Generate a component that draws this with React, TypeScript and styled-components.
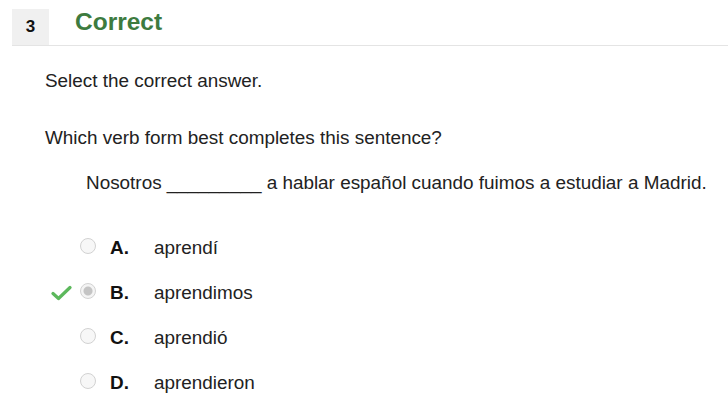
import React from "react";
import styled, { createGlobalStyle } from "styled-components";

const Global = createGlobalStyle`
  html, body { margin: 0; padding: 0; background: #fff; }
  body { font-family: "Liberation Sans", Arial, sans-serif; color: #222; }
`;

const Page = styled.div`
  width: 728px;
  height: 410px;
  overflow: hidden;
`;

const Header = styled.div`
  display: flex;
  align-items: stretch;
  margin: 9px 0 0 12px;
  height: 36px;
  border-bottom: 1px solid #e4e4e4;
`;

const Number = styled.div`
  width: 37px;
  background: #f0f0f0;
  display: flex;
  align-items: center;
  justify-content: center;
  font-weight: bold;
  font-size: 17px;
  color: #111;
`;

const Status = styled.div`
  margin-left: 26px;
  color: #3d7b3f;
  font-weight: bold;
  font-size: 24.5px;
  line-height: 28px;
  margin-top: -1px;
`;

const Body = styled.div`
  padding: 0 0 0 45px;
  font-size: 18.9px;
`;

const Instruction = styled.p`
  margin: 24px 0 0;
  line-height: 22px;
`;

const Question = styled.p`
  margin: 35px 0 0;
  line-height: 22px;
`;

const Sentence = styled.p`
  margin: 23px 0 0 41px;
  line-height: 22px;
`;

const Options = styled.div`
  margin-top: 42.5px;
  display: flex;
  flex-direction: column;
  gap: 23.3px;
`;

const Option = styled.div`
  display: flex;
  align-items: center;
  height: 22px;
`;

const Mark = styled.div`
  width: 30px;
  margin-left: 5px;
  display: flex;
  align-items: center;
`;

const Radio = styled.span<{ $checked?: boolean }>`
  width: 16px;
  height: 16px;
  border-radius: 50%;
  box-sizing: border-box;
  border: 1px solid #d2d2d2;
  background: ${(p) => (p.$checked ? "radial-gradient(circle, #c4c4c4 0 4px, #f4f4f4 5px)" : "#f7f7f7")};
  margin-top: -4px;
`;

const Letter = styled.span`
  font-weight: bold;
  width: 44px;
  margin-left: 14px;
  color: #111;
`;

const Text = styled.span`
  color: #222;
`;

const Check = () => (
  <svg width="22" height="18" viewBox="0 0 22 18">
    <path d="M3 9.5 L8.5 14.5 L20 3.5" fill="none" stroke="#5cb85c" strokeWidth="3.2" strokeLinecap="round" strokeLinejoin="round" />
  </svg>
);

const answers = [
  { letter: "A.", text: "aprendí" },
  { letter: "B.", text: "aprendimos", correct: true },
  { letter: "C.", text: "aprendió" },
  { letter: "D.", text: "aprendieron" },
];

export default function App() {
  return (
    <Page>
      <Global />
      <Header>
        <Number>3</Number>
        <Status>Correct</Status>
      </Header>
      <Body>
        <Instruction>Select the correct answer.</Instruction>
        <Question>Which verb form best completes this sentence?</Question>
        <Sentence>Nosotros _________ a hablar español cuando fuimos a estudiar a Madrid.</Sentence>
        <Options>
          {answers.map((a) => (
            <Option key={a.letter}>
              <Mark>{a.correct ? <Check /> : null}</Mark>
              <Radio $checked={a.correct} />
              <Letter>{a.letter}</Letter>
              <Text>{a.text}</Text>
            </Option>
          ))}
        </Options>
      </Body>
    </Page>
  );
}
